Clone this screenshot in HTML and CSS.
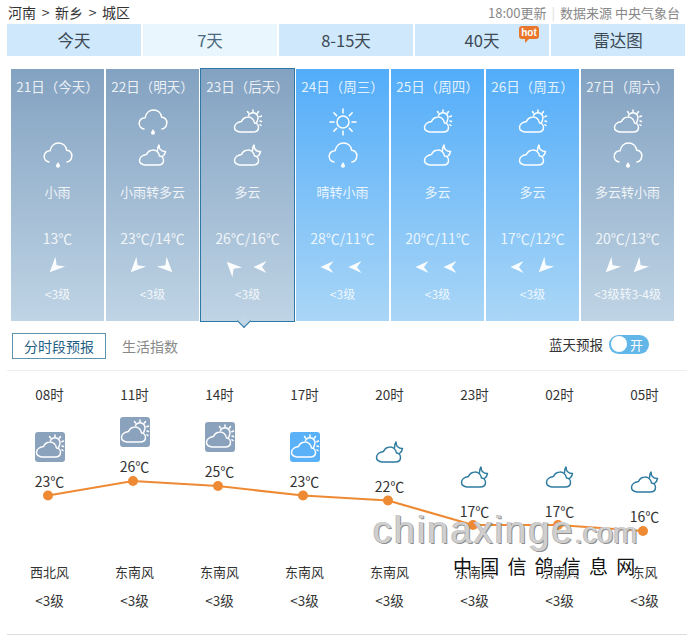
FILE: index.html
```html
<!DOCTYPE html>
<html lang="zh-CN">
<head>
<meta charset="utf-8">
<title>新乡城区天气预报</title>
<link rel="stylesheet" href="styles.css">
</head>
<body>
<svg class="defs" aria-hidden="true">
  <symbol id="rain" viewBox="0 0 30 30">
    <path class="ln" d="M6 22C3 21.5 1 19 1.2 16C1.4 13 4 10.5 7.2 10.7C8 6 11.5 3 15.5 3C19.8 3 23.2 6 23.8 10.3C27 10.5 29 13 28.8 16C28.6 19.3 26.5 21.5 24 22"/>
    <path class="fl" d="M15 22C16 23.8 17 24.8 17 25.8A2 2 0 0 1 13 25.8C13 24.8 14 23.8 15 22Z"/>
  </symbol>
  <symbol id="cloudy" viewBox="0 0 30 30">
    <path class="ln" d="M7 25H20C23.5 25 25.5 23 25.5 20.5C25.5 17.7 23.5 16 21.5 16C21 12.5 18 9.5 14.5 10C11.5 10.3 9.5 12 8.5 14.5C4.5 15 1.5 17.5 1.5 20.5C1.5 23 4 25 7 25Z"/>
    <path class="ln" d="M15.5 8.5A5 5 0 0 1 24.5 13A5 5 0 0 1 23.5 15.5"/>
    <path class="ln" d="M20 3V5M14.5 4.5L15.5 6M25.5 4.5L24.5 6M28.5 9L26.8 9.8M28.5 14.5L27 14M28 18.5L27 17.8"/>
  </symbol>
  <symbol id="moon" viewBox="0 0 30 30">
    <path class="ln" d="M7 25H20C23.5 25 25.5 23 25.5 20.5C25.5 17.7 23.5 16 21.5 16C21 12.5 18 9.5 14.5 10C11.5 10.3 9.5 12 8.5 14.5C4.5 15 1.5 17.5 1.5 20.5C1.5 23 4 25 7 25Z"/>
    <path class="ln" d="M19.5 10.5C19.5 8 20 6.5 21 5C21 9 23.5 11.5 27.5 11.5C27 14 26 15.5 24.5 16.5"/>
  </symbol>
  <symbol id="sun" viewBox="0 0 30 30">
    <circle class="ln" cx="15" cy="15" r="6"/>
    <path class="ln" d="M15 2V6M15 24V28M2 15H6M24 15H28M5.8 5.8L8.6 8.6M21.4 21.4L24.2 24.2M5.8 24.2L8.6 21.4M21.4 8.6L24.2 5.8"/>
  </symbol>
  <symbol id="wind" viewBox="0 0 14 14">
    <path class="fl" d="M0.5 7L13.5 1L9 7L13.5 13Z"/>
  </symbol>
</svg>

<div class="page">
  <header class="crumbs">
    <div class="path">河南 &gt; 新乡 &gt; 城区</div>
    <div class="source">18:00更新<span class="sep">|</span>数据来源 中央气象台</div>
  </header>

  <nav class="tabs">
    <a class="tab">今天</a>
    <a class="tab active">7天</a>
    <a class="tab">8-15天</a>
    <a class="tab">40天<span class="hot">hot</span></a>
    <a class="tab">雷达图</a>
  </nav>

  <section class="days">
    <article class="day grey">
      <div class="date">21日（今天）</div>
      <div class="wicon"></div>
      <svg class="wicon"><use href="#rain"/></svg>
      <div class="desc">小雨</div>
      <div class="temp">13℃</div>
      <div class="arrows"><svg class="arrow sw"><use href="#wind"/></svg></div>
      <div class="level">&lt;3级</div>
    </article>
    <article class="day grey">
      <div class="date">22日（明天）</div>
      <svg class="wicon"><use href="#rain"/></svg>
      <svg class="wicon"><use href="#moon"/></svg>
      <div class="desc">小雨转多云</div>
      <div class="temp">23℃/14℃</div>
      <div class="arrows"><svg class="arrow sw"><use href="#wind"/></svg><svg class="arrow se"><use href="#wind"/></svg></div>
      <div class="level">&lt;3级</div>
    </article>
    <article class="day grey selected">
      <div class="date">23日（后天）</div>
      <svg class="wicon"><use href="#cloudy"/></svg>
      <svg class="wicon"><use href="#moon"/></svg>
      <div class="desc">多云</div>
      <div class="temp">26℃/16℃</div>
      <div class="arrows"><svg class="arrow nw"><use href="#wind"/></svg><svg class="arrow w"><use href="#wind"/></svg></div>
      <div class="level">&lt;3级</div>
    </article>
    <article class="day">
      <div class="date">24日（周三）</div>
      <svg class="wicon"><use href="#sun"/></svg>
      <svg class="wicon"><use href="#rain"/></svg>
      <div class="desc">晴转小雨</div>
      <div class="temp">28℃/11℃</div>
      <div class="arrows"><svg class="arrow w"><use href="#wind"/></svg><svg class="arrow w"><use href="#wind"/></svg></div>
      <div class="level">&lt;3级</div>
    </article>
    <article class="day">
      <div class="date">25日（周四）</div>
      <svg class="wicon"><use href="#cloudy"/></svg>
      <svg class="wicon"><use href="#moon"/></svg>
      <div class="desc">多云</div>
      <div class="temp">20℃/11℃</div>
      <div class="arrows"><svg class="arrow w"><use href="#wind"/></svg><svg class="arrow w"><use href="#wind"/></svg></div>
      <div class="level">&lt;3级</div>
    </article>
    <article class="day">
      <div class="date">26日（周五）</div>
      <svg class="wicon"><use href="#cloudy"/></svg>
      <svg class="wicon"><use href="#moon"/></svg>
      <div class="desc">多云</div>
      <div class="temp">17℃/12℃</div>
      <div class="arrows"><svg class="arrow w"><use href="#wind"/></svg><svg class="arrow sw"><use href="#wind"/></svg></div>
      <div class="level">&lt;3级</div>
    </article>
    <article class="day grey">
      <div class="date">27日（周六）</div>
      <svg class="wicon"><use href="#cloudy"/></svg>
      <svg class="wicon"><use href="#rain"/></svg>
      <div class="desc">多云转小雨</div>
      <div class="temp">20℃/13℃</div>
      <div class="arrows"><svg class="arrow sw"><use href="#wind"/></svg><svg class="arrow sw"><use href="#wind"/></svg></div>
      <div class="level">&lt;3级转3-4级</div>
    </article>
  </section>

  <div class="subbar">
    <a class="subtab on">分时段预报</a>
    <a class="subtab">生活指数</a>
    <div class="bluesky">蓝天预报<span class="toggle"><i class="knob"></i>开</span></div>
  </div>

  <section class="hours">
    <div class="hour">
      <div class="time">08时</div>
      <div class="hicon grey" style="margin-top:28px"><svg class="wicon"><use href="#cloudy"/></svg></div>
      <div class="htemp">23℃</div>
      <div class="hwind">西北风</div><div class="hlevel">&lt;3级</div>
    </div>
    <div class="hour">
      <div class="time">11时</div>
      <div class="hicon grey" style="margin-top:13px"><svg class="wicon"><use href="#cloudy"/></svg></div>
      <div class="htemp">26℃</div>
      <div class="hwind">东南风</div><div class="hlevel">&lt;3级</div>
    </div>
    <div class="hour">
      <div class="time">14时</div>
      <div class="hicon grey" style="margin-top:18px"><svg class="wicon"><use href="#cloudy"/></svg></div>
      <div class="htemp">25℃</div>
      <div class="hwind">东南风</div><div class="hlevel">&lt;3级</div>
    </div>
    <div class="hour">
      <div class="time">17时</div>
      <div class="hicon blue" style="margin-top:28px"><svg class="wicon"><use href="#cloudy"/></svg></div>
      <div class="htemp">23℃</div>
      <div class="hwind">东南风</div><div class="hlevel">&lt;3级</div>
    </div>
    <div class="hour">
      <div class="time">20时</div>
      <div class="hicon night" style="margin-top:33px"><svg class="wicon"><use href="#moon"/></svg></div>
      <div class="htemp">22℃</div>
      <div class="hwind">东南风</div><div class="hlevel">&lt;3级</div>
    </div>
    <div class="hour">
      <div class="time">23时</div>
      <div class="hicon night" style="margin-top:58px"><svg class="wicon"><use href="#moon"/></svg></div>
      <div class="htemp">17℃</div>
      <div class="hwind">东南风</div><div class="hlevel">&lt;3级</div>
    </div>
    <div class="hour">
      <div class="time">02时</div>
      <div class="hicon night" style="margin-top:58px"><svg class="wicon"><use href="#moon"/></svg></div>
      <div class="htemp">17℃</div>
      <div class="hwind">东南风</div><div class="hlevel">&lt;3级</div>
    </div>
    <div class="hour">
      <div class="time">05时</div>
      <div class="hicon night" style="margin-top:63px"><svg class="wicon"><use href="#moon"/></svg></div>
      <div class="htemp">16℃</div>
      <div class="hwind">东风</div><div class="hlevel">&lt;3级</div>
    </div>
    <svg class="chart" viewBox="0 0 680 264">
      <polyline class="curve" points="41,125.5 126,111 211,116 296,125.5 381,130.5 466,155 551,155 636,161"/>
      <g class="dots">
        <circle cx="41" cy="125.5" r="5"/><circle cx="126" cy="111" r="5"/><circle cx="211" cy="116" r="5"/><circle cx="296" cy="125.5" r="5"/>
        <circle cx="381" cy="130.5" r="5"/><circle cx="466" cy="155" r="5"/><circle cx="551" cy="155" r="5"/><circle cx="636" cy="161" r="5"/>
      </g>
    </svg>
  </section>
</div>

<div class="mark-en">chinaxinge<span class="mark-com">.com</span></div>
<div class="mark-cn">中国信鸽信息网</div>
</body>
</html>
```

FILE: styles.css
```css
* { box-sizing: border-box; }
html, body { margin: 0; padding: 0; }
body {
  width: 688px;
  height: 636px;
  position: relative;
  overflow: hidden;
  background: #fff;
  font-family: "Noto Sans CJK SC", "Liberation Sans", sans-serif;
  color: #333;
}
.defs { position: absolute; width: 0; height: 0; }
.ln { fill: none; stroke: currentColor; stroke-width: 1.5; stroke-linecap: round; stroke-linejoin: round; }
.fl { fill: currentColor; }

.page { padding-left: 7px; width: 688px; }

.crumbs {
  height: 24px;
  display: flex;
  justify-content: space-between;
  align-items: center;
  padding: 0 8px 0 1px;
}
.path { font-size: 14px; color: #333; word-spacing: 2.5px; }
.source { font-size: 13px; color: #888; }
.sep { color: #ddd; margin: 0 5px; }

.tabs { display: flex; gap: 2px; height: 32px; }
.tab {
  position: relative;
  width: 134px;
  background: #cfe8fc;
  font-size: 16.5px;
  line-height: 32px;
  text-align: center;
  color: #3d4a55;
}
.tab.active { background: #e9f6fe; color: #4d6a80; }
.hot {
  position: absolute;
  left: 104px;
  top: 2px;
  width: 20px;
  height: 13px;
  border-radius: 3px;
  background: #e9772b;
  color: #fff;
  font-family: "Liberation Sans", sans-serif;
  font-size: 10px;
  font-weight: 700;
  line-height: 13px;
}
.hot::after {
  content: "";
  position: absolute;
  left: 6px;
  top: 13px;
  border: 2px solid transparent;
  border-top-color: #e9772b;
  border-left-color: #e9772b;
}

.days { display: flex; gap: 2px; margin: 13px 0 0 4px; }
.day {
  position: relative;
  width: 93px;
  height: 252px;
  padding-top: 7px;
  display: flex;
  flex-direction: column;
  align-items: center;
  color: rgba(255, 255, 255, .85);
  background: linear-gradient(#53adf9, #aad6f6);
  text-align: center;
}
.day.grey { background: linear-gradient(#83a2c1, #bfd4e5); }
.day.selected { width: 95px; height: 254px; margin: -1px -1px -1px; padding-top: 7px; border: 1px solid #2c78a6; }
.day.selected::after {
  content: "";
  position: absolute;
  left: 38px;
  bottom: -5px;
  width: 9px;
  height: 9px;
  background: #c0d5e5;
  border-right: 1px solid #2c78a6;
  border-bottom: 1px solid #2c78a6;
  transform: rotate(45deg);
}
.date { height: 20px; font-size: 13.5px; line-height: 20px; white-space: nowrap; }
.wicon { display: block; width: 30px; height: 30px; flex: none; color: #fff; }
.date + .wicon { margin-top: 11px; margin-bottom: 3px; }
.desc { height: 20px; margin-top: 12px; font-size: 13px; line-height: 20px; white-space: nowrap; }
.temp { height: 20px; margin-top: 26px; font-size: 14px; line-height: 20px; white-space: nowrap; }
.arrows { display: flex; justify-content: center; gap: 14px; height: 14px; margin-top: 12px; }
.arrow { width: 14px; height: 14px; color: rgba(255, 255, 255, .95); }
.arrow.w { transform: translateX(-2px); }
.arrow.sw { transform: translateX(-3px) rotate(-45deg) scale(1.15); }
.arrow.se { transform: rotate(-135deg) scale(1.15); }
.arrow.nw { transform: translateX(-2px) rotate(45deg) scale(1.15); }
.level { height: 20px; margin-top: 10px; font-size: 12px; line-height: 20px; white-space: nowrap; }

.subbar {
  display: flex;
  align-items: center;
  height: 26px;
  margin: 12px 0 0 5px;
  padding-right: 39px;
}
.subtab { font-size: 14px; color: #888; margin-left: 16px; }
.subtab.on {
  width: 94px;
  height: 26px;
  margin-left: 0;
  border: 1px solid #5d94ad;
  color: #1f5f85;
  line-height: 24px;
  text-align: center;
}
.bluesky {
  margin-left: auto;
  display: flex;
  align-items: center;
  gap: 6px;
  font-size: 13.5px;
  color: #333;
  position: relative;
  top: -2px;
}
.toggle {
  display: flex;
  align-items: center;
  width: 40px;
  height: 19px;
  border-radius: 10px;
  background: #62b6e8;
  color: #fff;
  font-size: 13px;
  padding-left: 2px;
  gap: 3px;
}
.knob { width: 16px; height: 16px; border-radius: 50%; background: #fff; flex: none; }

.hours {
  position: relative;
  display: flex;
  width: 680px;
  height: 265px;
  margin-top: 11px;
  padding-top: 13px;
  border-top: 1px solid #eee;
  border-bottom: 1px solid #ddd;
}
.hour {
  width: 85px;
  height: 226px;
  display: flex;
  flex-direction: column;
  align-items: center;
  font-size: 13px;
  color: #333;
}
.time { height: 20px; font-size: 13.5px; line-height: 20px; white-space: nowrap; }
.hicon { width: 30px; height: 30px; border-radius: 3px; }
.hicon.grey { background: #8ba2bd; }
.hicon.blue { background: #5bb1f8; }
.hicon.night .wicon { color: #2e7ba0; }
.htemp { height: 20px; margin-top: 9px; font-size: 14px; line-height: 20px; }
.hwind { margin-top: auto; height: 20px; line-height: 20px; }
.hlevel { margin-top: 8px; height: 20px; font-size: 13.5px; line-height: 20px; }
.chart { position: absolute; left: 0; top: -1px; width: 680px; height: 264px; pointer-events: none; }
.curve { fill: none; stroke: #ee8a33; stroke-width: 2.2; }
.dots circle { fill: #ee8a33; }

.mark-en {
  position: absolute;
  left: 373px;
  top: 506px;
  font-family: "Liberation Sans", sans-serif;
  font-size: 38px;
  line-height: 48px;
  letter-spacing: 2px;
  white-space: nowrap;
  color: #cfcfcf;
  text-shadow: 1px 1px 0 #8f8f8f, -1px 0 0 #bdbdbd;
}
.mark-com { font-size: 29px; letter-spacing: 0; }
.mark-cn {
  position: absolute;
  left: 453px;
  top: 553px;
  font-size: 19px;
  line-height: 26px;
  letter-spacing: 8.2px;
  white-space: nowrap;
  color: #111;
  text-shadow: 1px 1px 0 #fff, -1px -1px 0 #fff;
}
```
